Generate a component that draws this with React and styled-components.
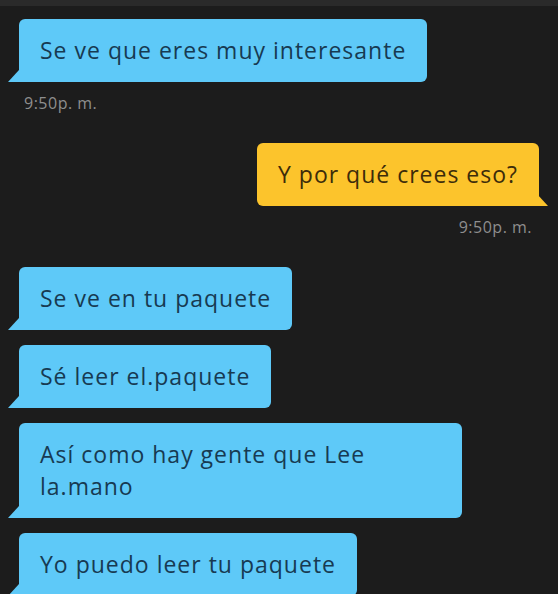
import styled, { createGlobalStyle, css } from 'styled-components';

const GlobalStyle = createGlobalStyle`
    html, body {
        margin: 0;
        padding: 0;
        background: #1c1c1c;
    }
    body {
        font-family: "Open Sans", "DejaVu Sans", sans-serif;
    }
`

const Screen = styled.div`
    width: 558px;
    height: 594px;
    overflow: hidden;
    background: #1c1c1c;
    border-top: 6px solid #2a2a2a;
    box-sizing: border-box;
`

const Thread = styled.div`
    display: flex;
    flex-direction: column;
    padding: 13px 19px 0 19px;
`

const Row = styled.div`
    display: flex;
    flex-direction: column;
    align-items: ${props => props.mine ? 'flex-end' : 'flex-start'};
    margin-top: ${props => props.gap || 0}px;
`

const Bubble = styled.div`
    position: relative;
    box-sizing: border-box;
    max-width: 443px;
    padding: 15px 21px 16px 21px;
    font-size: 23px;
    font-weight: 500;
    line-height: 32px;
    letter-spacing: 1px;
    border-radius: 6px;

    ${props => props.mine ? css`
        background: #fcc42c;
        color: #3d2c0a;
        border-bottom-right-radius: 0;
    ` : css`
        background: #5ec9f8;
        color: #173a52;
        border-bottom-left-radius: 0;
    `}

    &::before {
        content: "";
        position: absolute;
        bottom: 0;
        width: 11px;
        height: 12px;
        background: inherit;
        ${props => props.mine ? css`
            right: -9px;
            clip-path: polygon(0 0, 100% 100%, 0 100%);
        ` : css`
            left: -11px;
            clip-path: polygon(100% 0, 100% 100%, 0 100%);
        `}
    }
`

const Time = styled.div`
    font-size: 16px;
    letter-spacing: 0.5px;
    color: #8e8e8e;
    margin-top: 10px;
    padding: ${props => props.mine ? '0 7px 0 0' : '0 0 0 5px'};
`

const messages = [
    { text: 'Se ve que eres muy interesante', time: '9:50p. m.', gap: 0 },
    { text: 'Y por qué crees eso?', time: '9:50p. m.', mine: true, gap: 29 },
    { text: 'Se ve en tu paquete', gap: 29 },
    { text: 'Sé leer el.paquete', gap: 15 },
    { text: 'Así como hay gente que Lee la.mano', gap: 15 },
    { text: 'Yo puedo leer tu paquete', gap: 15 },
]

const App = () => {
    return (
        <Screen>
            <GlobalStyle />
            <Thread>
                {messages.map((m, i) => (
                    <Row key={i} mine={m.mine} gap={m.gap}>
                        <Bubble mine={m.mine}>{m.text}</Bubble>
                        {m.time && <Time mine={m.mine}>{m.time}</Time>}
                    </Row>
                ))}
            </Thread>
        </Screen>
    )
}

export default App;
